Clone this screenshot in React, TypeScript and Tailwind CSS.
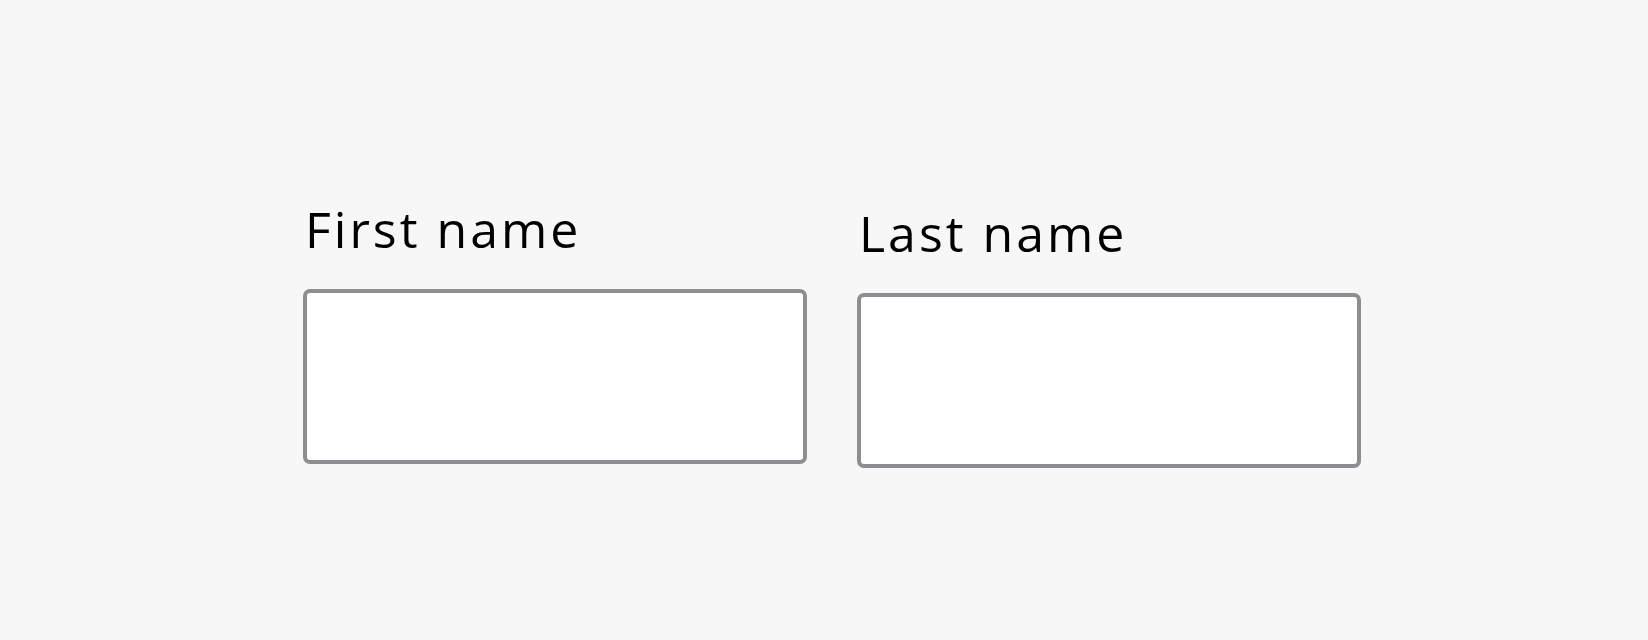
import React from "react";

function Field({ label, extra }: { label: string; extra: string }) {
  return (
    <div className={`flex flex-col ${extra}`}>
      <label className="text-[50px] leading-none text-black pl-[2px] tracking-[3px]" style={{ fontFamily: "'Open Sans', sans-serif" }}>
        {label}
      </label>
      <div className="mt-[35px] w-[504px] h-[175px] rounded-[7px] border-4 border-solid border-[#8e8e92] bg-white">
        <input type="text" className="w-full h-full bg-transparent outline-none px-4 text-[28px]" aria-label={label} />
      </div>
    </div>
  );
}

export default function App() {
  return (
    <div className="w-[1648px] h-[640px] bg-[#f7f7f7] flex items-start pl-[303px] pt-[204px] gap-[50px]" style={{ fontFamily: "'Open Sans', sans-serif" }}>
      <Field label="First name" extra="" />
      <Field label="Last name" extra="mt-[4px]" />
    </div>
  );
}
